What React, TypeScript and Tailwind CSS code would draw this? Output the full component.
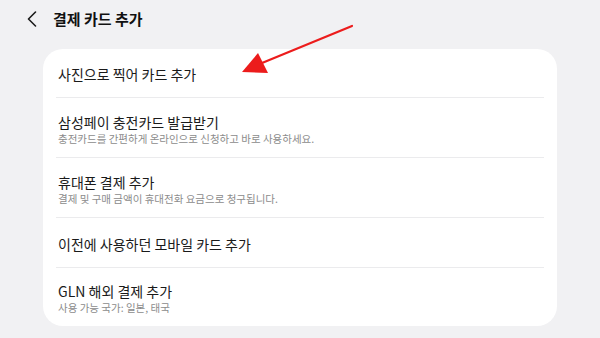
import React from "react";

interface Row {
  title: string;
  sub?: string;
  rowClass: string;
}

const rows: Row[] = [
  { title: "사진으로 찍어 카드 추가", rowClass: "h-[48px] pt-[16px]" },
  {
    title: "삼성페이 충전카드 발급받기",
    sub: "충전카드를 간편하게 온라인으로 신청하고 바로 사용하세요.",
    rowClass: "h-[60px] pt-[15px] border-t border-[#ebebed]",
  },
  {
    title: "휴대폰 결제 추가",
    sub: "결제 및 구매 금액이 휴대전화 요금으로 청구됩니다.",
    rowClass: "h-[60px] pt-[15px] border-t border-[#ebebed]",
  },
  {
    title: "이전에 사용하던 모바일 카드 추가",
    rowClass: "h-[50px] pt-[17px] border-t border-[#ebebed]",
  },
  {
    title: "GLN 해외 결제 추가",
    sub: "사용 가능 국가: 일본, 태국",
    rowClass: "h-[59px] pt-[14px] border-t border-[#ebebed]",
  },
];

export default function App() {
  return (
    <div
      className="relative w-[600px] h-[338px] overflow-hidden bg-[#f1f1f3]"
      style={{ fontFamily: '"Noto Sans CJK KR", "Noto Sans", sans-serif' }}
    >
      {/* Header */}
      <div className="flex items-center h-[38px] pl-[27px]">
        <svg width="10" height="16" viewBox="0 0 10 16" fill="none">
          <path
            d="M8.5 1L1.5 8L8.5 15"
            stroke="#1c1c1c"
            strokeWidth="1.6"
            strokeLinecap="round"
            strokeLinejoin="round"
          />
        </svg>
        <span className="ml-[16px] text-[15px] leading-[20px] font-bold text-[#111]">
          결제 카드 추가
        </span>
      </div>

      {/* Card */}
      <div className="ml-[43px] mt-[11px] w-[514px] rounded-[20px] bg-white px-[13px]">
        {rows.map((row) => (
          <div key={row.title} className={`px-[2px] ${row.rowClass}`}>
            <div className="text-[14px] leading-[18px] text-[#1a1a1a]">
              {row.title}
            </div>
            {row.sub && (
              <div className="text-[10.5px] leading-[16px] text-[#8c8c8c]">
                {row.sub}
              </div>
            )}
          </div>
        ))}
      </div>

      {/* Red annotation arrow */}
      <svg
        className="absolute left-0 top-0 pointer-events-none"
        width="600"
        height="338"
        viewBox="0 0 600 338"
      >
        <line
          x1="352"
          y1="26"
          x2="262"
          y2="63"
          stroke="#ec1c1c"
          strokeWidth="2.2"
          strokeLinecap="round"
        />
        <polygon points="242,72 258,53 268,73" fill="#ec1c1c" />
      </svg>
    </div>
  );
}
